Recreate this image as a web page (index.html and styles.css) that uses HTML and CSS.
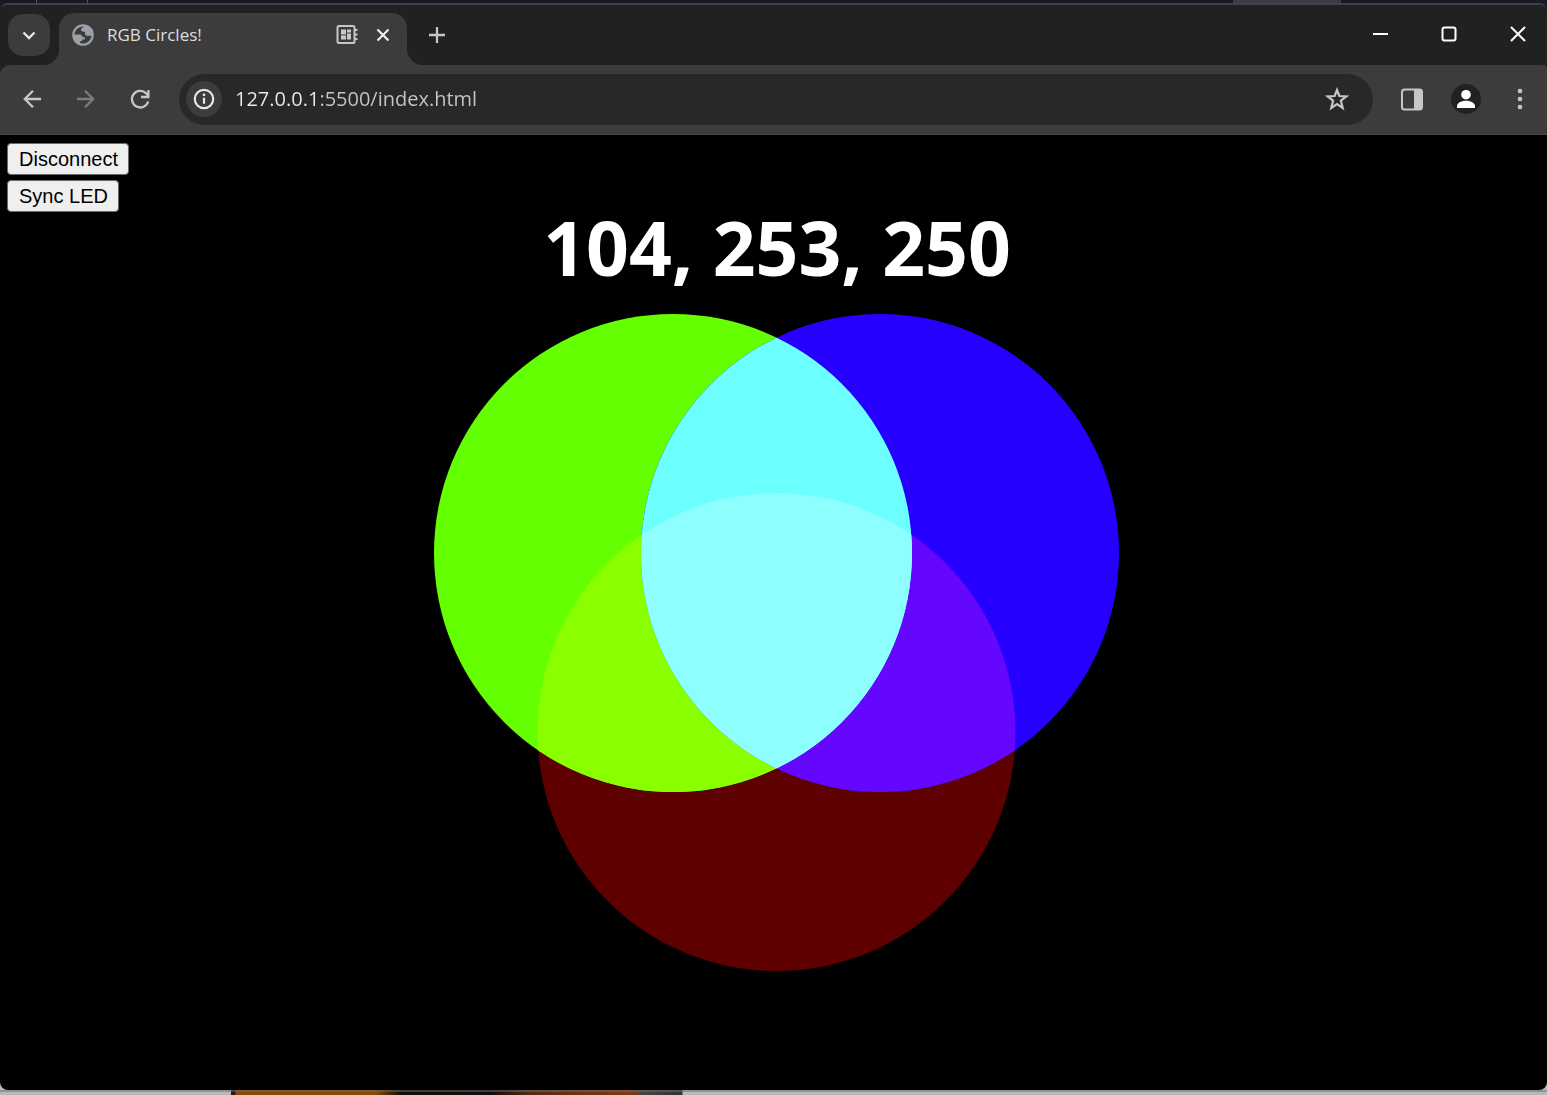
FILE: index.html
```html
<!DOCTYPE html>
<html lang="en">
<head>
<meta charset="utf-8">
<meta name="viewport" content="width=device-width, initial-scale=1">
<title>RGB Circles!</title>
<link rel="stylesheet" href="styles.css">
</head>
<body>
<div class="desktop-top"></div>
<div class="window">
  <header class="chrome">
    <div class="tabstrip">
      <button class="tab-search" aria-label="Search tabs">
        <svg width="42" height="42" viewBox="0 0 42 42"><path d="M15.500 18.500l5.500 5.500 5.500-5.500" fill="none" stroke="#e6e6e6" stroke-width="2.400"/></svg>
      </button>
      <div class="tab">
        <svg class="favicon" width="24" height="24" viewBox="0 0 24 24"><circle cx="12" cy="12" r="9.700" fill="none" stroke="#9aa0a6" stroke-width="2.200"/><path fill="#9aa0a6" d="M13.500 2.500c-.3 1.800-2.500 2-3.200 3.300-.7 1.600.5 2.900 2.400 2.900h1.300v2c0 1.300.9 2 2 2h5.600L22 7l-4-4zM2 11.500h6.500c2 0 2.800 1 2.800 2.500h2.400v2.600h-2.400c0 1.500-1 2-2.300 2v3L4 19z"/></svg>
        <span class="tab-title">RGB Circles!</span>
        <svg class="tab-chip" width="24" height="24" viewBox="0 0 24 24"><rect x="2.500" y="3" width="17" height="17" rx="1.500" fill="none" stroke="#c7c7c7" stroke-width="2"/><path fill="#c7c7c7" d="M6 6.500h5v5H6zM12 6.500h4v3h-4zM6 12.500h5v4H6zM12 10.500h4v6h-4zM20 6h2.500v2H20zM20 10.500h2.500v2H20zM20 15h2.500v2H20z"/></svg>
        <button class="tab-close" aria-label="Close tab"><svg width="24" height="24" viewBox="0 0 24 24"><path d="M6.500 6.500l11 11M17.500 6.500l-11 11" stroke="#ededed" stroke-width="2.200"/></svg></button>
      </div>
      <button class="new-tab" aria-label="New tab"><svg width="24" height="24" viewBox="0 0 24 24"><path d="M12 4v16M4 12h16" stroke="#c7c7c7" stroke-width="2.300"/></svg></button>
      <div class="window-controls">
        <button aria-label="Minimize"><svg width="24" height="24" viewBox="0 0 24 24"><path d="M5 12h15" stroke="#fff" stroke-width="2"/></svg></button>
        <button aria-label="Maximize"><svg width="24" height="24" viewBox="0 0 24 24"><rect x="5.500" y="5.500" width="13" height="13" rx="2" fill="none" stroke="#fff" stroke-width="2"/></svg></button>
        <button aria-label="Close"><svg width="24" height="24" viewBox="0 0 24 24"><path d="M5 5l14 14M19 5L5 19" stroke="#fff" stroke-width="2"/></svg></button>
      </div>
    </div>
    <div class="toolbar">
      <button class="tool" aria-label="Back"><svg width="24" height="24" viewBox="0 0 24 24"><path d="M21 12H4.500M13 3.800L4.800 12l8.200 8.200" fill="none" stroke="#c7c7c7" stroke-width="2.300"/></svg></button>
      <button class="tool" aria-label="Forward"><svg width="24" height="24" viewBox="0 0 24 24"><path d="M3 12h16.500M11 3.800l8.200 8.200-8.200 8.200" fill="none" stroke="#7c7c7c" stroke-width="2.300"/></svg></button>
      <button class="tool" aria-label="Reload"><svg width="24" height="24" viewBox="0 0 24 24"><path d="M20.200 14.500A8.300 8.300 0 1 1 18.300 6.500L20 8.500M20.400 3v7H13" fill="none" stroke="#c7c7c7" stroke-width="2.300"/></svg></button>
      <div class="omnibox">
        <button class="site-info" aria-label="Site information"><svg width="24" height="24" viewBox="0 0 24 24"><circle cx="12" cy="12" r="9.200" fill="none" stroke="#e6e6e6" stroke-width="2.200"/><path d="M12 10.800v6" stroke="#e6e6e6" stroke-width="2.200"/><circle cx="12" cy="7.800" r="1.400" fill="#e6e6e6"/></svg></button>
        <input class="url" type="text" aria-label="Address" value="127.0.0.1:5500/index.html">
        <button class="bookmark" aria-label="Bookmark this page"><svg width="24" height="24" viewBox="0 0 24 24"><path d="M12 3l2.300 6 7 .4-5.400 4.300 1.800 7.200L12 17l-5.700 3.900 1.800-7.200L2.700 9.400l7-.4z" fill="none" stroke="#c7c7c7" stroke-width="2.200"/></svg></button>
      </div>
      <button class="tool" aria-label="Side panel"><svg width="24" height="24" viewBox="0 0 24 24"><rect x="2" y="2.500" width="20" height="20" rx="2.500" fill="none" stroke="#c7c7c7" stroke-width="2"/><path d="M14 2h8v21h-8z" fill="#c7c7c7"/></svg></button>
      <button class="tool" aria-label="Profile"><svg width="30" height="30" viewBox="0 0 30 30"><circle cx="15" cy="15" r="15" fill="#202221"/><circle cx="15" cy="10.700" r="4.800" fill="#fff"/><path d="M6 24v-2c0-3.500 5.500-5.300 9-5.300s9 1.800 9 5.300v2z" fill="#fff"/></svg></button>
      <button class="tool" aria-label="Menu"><svg width="24" height="24" viewBox="0 0 24 24"><g fill="#c7c7c7"><circle cx="12" cy="4" r="2.300"/><circle cx="12" cy="12" r="2.300"/><circle cx="12" cy="20" r="2.300"/></g></svg></button>
    </div>
  </header>
  <main class="page">
    <div class="actions">
      <button class="action">Disconnect</button>
      <button class="action">Sync LED</button>
    </div>
    <h1 class="rgb-value">104, 253, 250</h1>
    <svg class="circles" viewBox="0 0 686 658" role="img" aria-label="Overlapping red, green and blue circles">
      <defs>
        <clipPath id="in-green"><circle cx="239" cy="239" r="239"/></clipPath>
        <clipPath id="in-blue"><circle cx="446" cy="239" r="239"/></clipPath>
      </defs>
      <circle cx="342.500" cy="418" r="239" fill="#5f0000"/>
      <circle cx="239" cy="239" r="239" fill="#64ff00"/>
      <circle cx="446" cy="239" r="239" fill="#2600ff"/>
      <g clip-path="url(#in-green)">
        <circle cx="342.500" cy="418" r="239" fill="#8aff00"/>
      </g>
      <g clip-path="url(#in-blue)">
        <circle cx="342.500" cy="418" r="239" fill="#6506ff"/>
        <circle cx="239" cy="239" r="239" fill="#6bffff"/>
        <g clip-path="url(#in-green)">
          <circle cx="342.500" cy="418" r="239" fill="#8dffff"/>
        </g>
      </g>
    </svg>
  </main>
</div>
<div class="desktop-bottom"></div>
</body>
</html>
```
FILE: styles.css
```css
* { box-sizing: border-box; }

body {
  margin: 0;
  min-height: 100vh;
  display: flex;
  flex-direction: column;
  background: linear-gradient(#1b1a22 50%, #b9b7b8 50%);
  font-family: "Open Sans", "Noto Sans", sans-serif;
}

button {
  padding: 0;
  border: 0;
  background: none;
  font: inherit;
}

svg { display: block; }

/* Strips of the desktop around the window */
.desktop-top {
  height: 3px;
  background: linear-gradient(90deg,
    #1b1a22 36px, #55545a 36px 37px, #1b1a22 37px 87px,
    #55545a 87px 88px, #1b1a22 88px calc(100% - 314px),
    #3e3b49 calc(100% - 314px) calc(100% - 206px), #1b1a22 calc(100% - 206px));
}

.desktop-bottom {
  height: 5px;
  background:
    linear-gradient(rgba(110, 108, 112, 0.5) 2px, transparent 2px),
    linear-gradient(90deg,
      #b9b7b8 231px, #241c20 231px 235px, #8a4906 236px, #8a4906 375px,
      #16100a 400px, #120d0b 490px, #572a12 530px, #803b12 630px,
      #46423c 645px, #343236 682px, #b9b7b8 683px);
}

.window {
  flex: 1;
  display: flex;
  flex-direction: column;
  overflow: hidden;
  border-top: 2px solid #414146;
  border-radius: 8px;
  background: #000;
}

.chrome { background: #202221; }

/* Tabs */
.tabstrip {
  display: flex;
  align-items: flex-end;
  height: 60px;
  padding: 0 17px 0 8px;
}

.tab-search {
  position: relative;
  z-index: 1;
  margin-bottom: 9px;
  border-radius: 15px;
  background: #3c3c3c;
}

.tab {
  position: relative;
  display: flex;
  align-items: center;
  width: 348px;
  height: 52px;
  margin-left: 9px;
  padding: 0 12px 8px;
  border-radius: 15px 15px 0 0;
  background: #3c3c3c;
}

.tab::before,
.tab::after {
  content: "";
  position: absolute;
  bottom: 0;
  width: 17px;
  height: 17px;
}

.tab::before {
  right: 100%;
  background: radial-gradient(circle at 0 0, #202221 17px, #3c3c3c 18px);
}

.tab::after {
  left: 100%;
  background: radial-gradient(circle at 100% 0, #202221 17px, #3c3c3c 18px);
}

.tab-title {
  flex: 1;
  margin-left: 12px;
  color: #dedede;
  font-size: 17px;
  line-height: 24px;
}

.tab-close { margin-left: 12px; }

.new-tab {
  margin: 0 auto 18px 18px;
}

.window-controls {
  display: flex;
  gap: 45px;
  margin-bottom: 19px;
}

/* Toolbar */
.toolbar {
  display: flex;
  align-items: center;
  height: 70px;
  padding-left: 5px;
  border-bottom: 1px solid #4a4a4a;
  border-radius: 10px 4px 0 0;
  background: #3c3c3c;
}

.tool {
  display: flex;
  justify-content: center;
  width: 54px;
  padding-bottom: 1px;
}

.omnibox {
  flex: 1;
  display: flex;
  align-items: center;
  height: 51px;
  margin: 0 12px;
  padding: 0 24px 1px 7px;
  border-radius: 26px;
  background: #282828;
}

.site-info {
  padding: 6px;
  border-radius: 50%;
  background: #3c3c3c;
}

/* The host part of the address is brighter than the rest */
.url {
  flex: 1;
  min-width: 0;
  margin-left: 13px;
  padding: 0;
  border: 0;
  outline: 0;
  background: linear-gradient(90deg, #ececec 84px, #c7c7c7 84px);
  background-clip: text;
  color: transparent;
  caret-color: #fff;
  font-family: inherit;
  font-size: 20px;
  line-height: 28px;
}

/* Page */
.page {
  flex: 1;
  display: flex;
  flex-direction: column;
  align-items: center;
  padding: 8px 0 8px 7px;
}

.actions {
  align-self: flex-start;
  display: flex;
  flex-direction: column;
  align-items: flex-start;
  gap: 5px;
}

.action {
  height: 32px;
  padding: 0 10px 1px 11px;
  border: 1px solid #6b6b6b;
  border-radius: 4px;
  background: #efefef;
  color: #000;
  font-family: "Liberation Sans", Arial, sans-serif;
  font-size: 20px;
  line-height: 28px;
}

.rgb-value {
  margin: 0;
  color: #fff;
  font-size: 75px;
  font-weight: 700;
  line-height: 70px;
}

.circles {
  width: 100%;
  max-width: 686px;
  margin-top: 32px;
}
```
